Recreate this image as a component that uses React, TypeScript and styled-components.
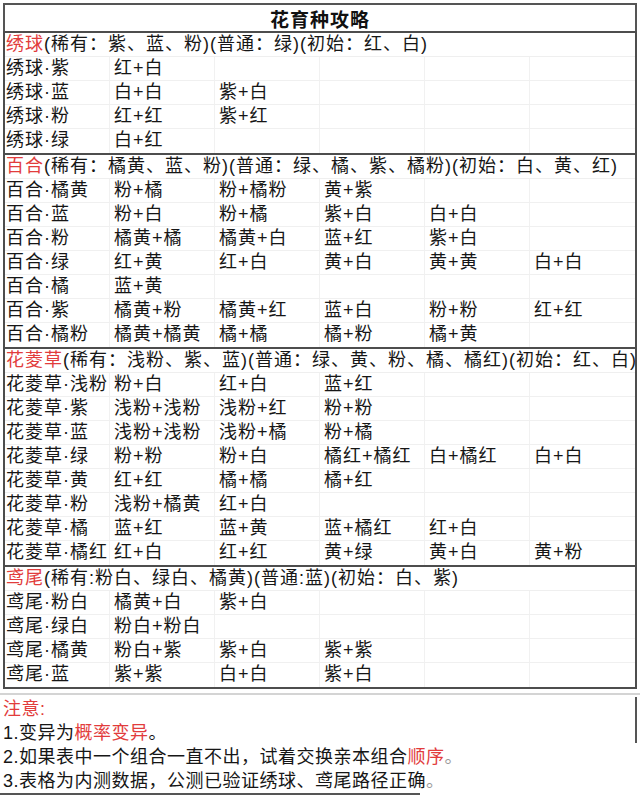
import React from "react";
import styled, { createGlobalStyle } from "styled-components";

const GlobalStyle = createGlobalStyle`
  html, body {
    margin: 0;
    padding: 0;
    background: #ffffff;
  }
  body {
    font-family: "Liberation Sans", "Noto Sans CJK SC", sans-serif;
    color: #161616;
  }
`;

const Sheet = styled.div`
  width: 634px;
  margin: 3px 0 0 3px;
  font-size: 18px;
  letter-spacing: 1px;
`;

const TitleBar = styled.div`
  box-sizing: border-box;
  height: 28px;
  border: 2px solid #555;
  border-bottom: none;
  display: flex;
  align-items: center;
  justify-content: center;
  font-size: 19px;
  font-weight: bold;
  color: #111;
`;

const Section = styled.section<{ $last?: boolean }>`
  border: 2px solid #4d4d4d;
  border-bottom: ${(p) => (p.$last ? "2px solid #4d4d4d" : "none")};
  overflow: hidden;
`;

const HeaderRow = styled.div`
  box-sizing: border-box;
  height: 24px;
  line-height: 23px;
  padding-left: 1px;
  white-space: nowrap;
  border-bottom: 1px solid #efefef;
`;

const Name = styled.span`
  color: #e23c3c;
`;

const Row = styled.div`
  box-sizing: border-box;
  display: grid;
  grid-template-columns: repeat(6, 105px);
  height: 24px;
  line-height: 23px;
  border-bottom: 1px solid #f0f0f0;
  &:last-child {
    border-bottom: none;
  }
`;

const Cell = styled.div<{ $first?: boolean }>`
  padding-left: ${(p) => (p.$first ? "1px" : "4px")};
  white-space: nowrap;
  border-right: 1px solid #f1f1f1;
  &:last-child {
    border-right: none;
  }
`;

const Notes = styled.div`
  position: relative;
  margin-top: 4px;
  margin-left: -3px;
  width: 640px;
  border-top: 2px solid #d4d4d4;
  padding: 2px 0 0 3px;
  box-sizing: border-box;
  font-size: 18px;
  line-height: 24px;
  letter-spacing: 0.5px;
  &::after {
    content: "";
    position: absolute;
    right: 3px;
    top: 2px;
    width: 2px;
    height: 46px;
    background: #555;
  }
`;

const NoteLine = styled.div`
  white-space: nowrap;
`;

const Hl = styled.span`
  color: #e23c3c;
`;

const Faint = styled.span`
  color: #9a9a9a;
`;

const Rule = styled.div`
  width: 420px;
  height: 2px;
  margin-left: -3px;
  background: #555;
`;

type Group = {
  name: string;
  info: string;
  rows: string[][];
};

const groups: Group[] = [
  {
    name: "绣球",
    info: "(稀有：紫、蓝、粉)(普通：绿)(初始：红、白)",
    rows: [
      ["绣球·紫", "红+白"],
      ["绣球·蓝", "白+白", "紫+白"],
      ["绣球·粉", "红+红", "紫+红"],
      ["绣球·绿", "白+红"],
    ],
  },
  {
    name: "百合",
    info: "(稀有：橘黄、蓝、粉)(普通：绿、橘、紫、橘粉)(初始：白、黄、红)",
    rows: [
      ["百合·橘黄", "粉+橘", "粉+橘粉", "黄+紫"],
      ["百合·蓝", "粉+白", "粉+橘", "紫+白", "白+白"],
      ["百合·粉", "橘黄+橘", "橘黄+白", "蓝+红", "紫+白"],
      ["百合·绿", "红+黄", "红+白", "黄+白", "黄+黄", "白+白"],
      ["百合·橘", "蓝+黄"],
      ["百合·紫", "橘黄+粉", "橘黄+红", "蓝+白", "粉+粉", "红+红"],
      ["百合·橘粉", "橘黄+橘黄", "橘+橘", "橘+粉", "橘+黄"],
    ],
  },
  {
    name: "花菱草",
    info: "(稀有：浅粉、紫、蓝)(普通：绿、黄、粉、橘、橘红)(初始：红、白)",
    rows: [
      ["花菱草·浅粉", "粉+白", "红+白", "蓝+红"],
      ["花菱草·紫", "浅粉+浅粉", "浅粉+红", "粉+粉"],
      ["花菱草·蓝", "浅粉+浅粉", "浅粉+橘", "粉+橘"],
      ["花菱草·绿", "粉+粉", "粉+白", "橘红+橘红", "白+橘红", "白+白"],
      ["花菱草·黄", "红+红", "橘+橘", "橘+红"],
      ["花菱草·粉", "浅粉+橘黄", "红+白"],
      ["花菱草·橘", "蓝+红", "蓝+黄", "蓝+橘红", "红+白"],
      ["花菱草·橘红", "红+白", "红+红", "黄+绿", "黄+白", "黄+粉"],
    ],
  },
  {
    name: "鸢尾",
    info: "(稀有:粉白、绿白、橘黄)(普通:蓝)(初始：白、紫)",
    rows: [
      ["鸢尾·粉白", "橘黄+白", "紫+白"],
      ["鸢尾·绿白", "粉白+粉白"],
      ["鸢尾·橘黄", "粉白+紫", "紫+白", "紫+紫"],
      ["鸢尾·蓝", "紫+紫", "白+白", "紫+白"],
    ],
  },
];

const fill = (row: string[]) => {
  const out = [...row];
  while (out.length < 6) out.push("");
  return out;
};

export default function App() {
  return (
    <>
      <GlobalStyle />
      <Sheet>
        <TitleBar>花育种攻略</TitleBar>
        {groups.map((g, gi) => (
          <Section key={g.name} $last={gi === groups.length - 1}>
            <HeaderRow>
              <Name>{g.name}</Name>
              {g.info}
            </HeaderRow>
            {g.rows.map((r) => (
              <Row key={r[0]}>
                {fill(r).map((c, ci) => (
                  <Cell key={ci} $first={ci === 0}>
                    {c}
                  </Cell>
                ))}
              </Row>
            ))}
          </Section>
        ))}
        <Notes>
          <NoteLine>
            <Hl>注意:</Hl>
          </NoteLine>
          <NoteLine>
            1.变异为<Hl>概率变异</Hl>。
          </NoteLine>
          <NoteLine>
            2.如果表中一个组合一直不出，试着交换亲本组合<Hl>顺序</Hl>
            <Faint>。</Faint>
          </NoteLine>
          <NoteLine>
            3.表格为内测数据，公测已验证绣球、鸢尾路径正确<Faint>。</Faint>
          </NoteLine>
        </Notes>
        <Rule />
      </Sheet>
    </>
  );
}
